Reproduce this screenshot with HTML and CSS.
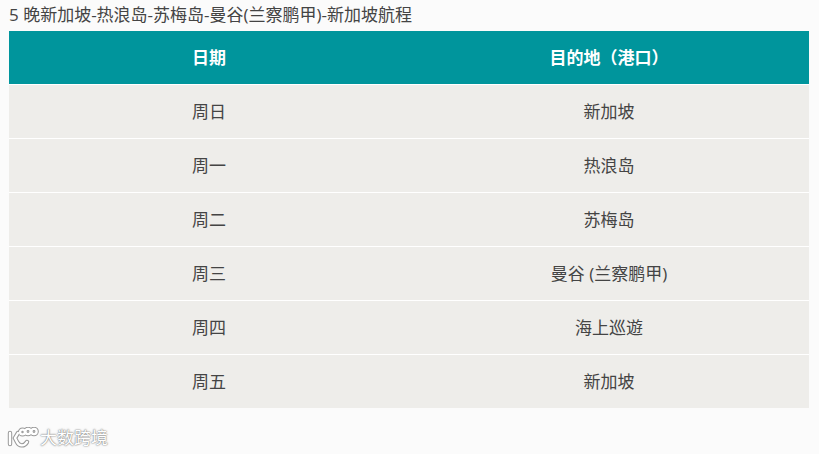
FILE: index.html
```html
<!DOCTYPE html>
<html lang="zh-CN">
<head>
<meta charset="utf-8">
<title>航程</title>
<link rel="stylesheet" href="styles.css">
</head>
<body>
<p class="title">5 晚新加坡-热浪岛-苏梅岛-曼谷(兰察鹏甲)-新加坡航程</p>
<table class="itinerary">
<thead>
<tr><th>日期</th><th>目的地（港口）</th></tr>
</thead>
<tbody>
<tr><td>周日</td><td>新加坡</td></tr>
<tr><td>周一</td><td>热浪岛</td></tr>
<tr><td>周二</td><td>苏梅岛</td></tr>
<tr><td>周三</td><td>曼谷 (兰察鹏甲)</td></tr>
<tr><td>周四</td><td>海上巡遊</td></tr>
<tr><td>周五</td><td>新加坡</td></tr>
</tbody>
</table>
<div class="mark">
<svg class="mark-logo" width="32" height="22" viewBox="0 0 32 22" fill="none" stroke="#fff" stroke-width="2.4" stroke-linecap="round">
<g stroke="#999" stroke-width="4.4">
<path d="M3 6v11M11 6L8 11l2 4c2 4 7 5 10 0"/>
<circle cx="15.5" cy="5" r="2.4"/><circle cx="21" cy="4.5" r="2.6"/><circle cx="27" cy="4.5" r="2.6"/>
</g>
<path d="M3 6v11M11 6L8 11l2 4c2 4 7 5 10 0"/>
<circle cx="15.5" cy="5" r="2.4"/><circle cx="21" cy="4.5" r="2.6"/><circle cx="27" cy="4.5" r="2.6"/>
</svg>
<span class="mark-text">大数跨境</span>
</div>
</body>
</html>
```
FILE: styles.css
```css
html, body {
  margin: 0;
  padding: 0;
}
body {
  width: 819px;
  height: 454px;
  overflow: hidden;
  background: #fbfbfb;
  color: #444;
  font: 17px/1.5 "Open Sans", "Noto Sans CJK SC", sans-serif;
  padding: 0 10px 0 9px;
  box-sizing: border-box;
}
.title {
  margin: 0;
  height: 31px;
  line-height: 30px;
}
.itinerary {
  width: 800px;
  border-collapse: collapse;
  table-layout: fixed;
}
.itinerary th {
  height: 53px;
  padding: 0;
  background: #00959c;
  color: #fff;
  font-weight: 700;
  text-align: center;
}
.itinerary td {
  height: 53px;
  padding: 0;
  background: #eeedea;
  border-top: 1px solid #fff;
  text-align: center;
}
.mark {
  display: flex;
  align-items: center;
  gap: 1px;
  margin: 18px 0 0 -2px;
  height: 24px;
}
.mark-logo {
  flex: none;
}
.mark-text {
  color: #fff;
  font-size: 17px;
  line-height: 24px;
  text-shadow: 0 0 2px #7a7a7a, 0 0 1px #7a7a7a;
}
```
